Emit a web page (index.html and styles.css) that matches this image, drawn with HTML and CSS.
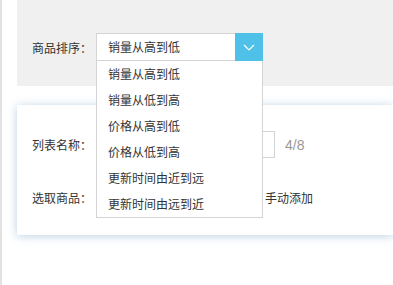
FILE: index.html
```html
<!DOCTYPE html>
<html lang="zh-CN">
<head>
  <meta charset="UTF-8" />
  <meta name="viewport" content="width=device-width, initial-scale=1.0"/>
  <title>列表设置</title>
  <link rel="stylesheet" href="styles.css">
</head>
<body>
  <div class="page">
    <div class="filter">
      <div class="row">
        <span class="label">商品排序：</span>
        <div class="select">
          <div class="select-value">销量从高到低</div>
          <div class="select-btn">
            <svg width="12" height="7" viewBox="0 0 12 7"><path d="M1 1 L6 6 L11 1" fill="none" stroke="#fff" stroke-width="1.2"/></svg>
          </div>
          <ul class="options">
            <li>销量从高到低</li>
            <li>销量从低到高</li>
            <li>价格从高到低</li>
            <li>价格从低到高</li>
            <li>更新时间由近到远</li>
            <li>更新时间由远到近</li>
          </ul>
        </div>
      </div>
    </div>

    <div class="card">
      <div class="row">
        <span class="label">列表名称：</span>
        <input class="text-input" type="text">
        <span class="count">4/8</span>
      </div>
      <div class="row row-pick">
        <span class="label">选取商品：</span>
        <label class="radio radio-auto"><i class="dot"></i></label>
        <label class="radio"><i class="dot"></i>手动添加</label>
      </div>
    </div>
  </div>
</body>
</html>
```

FILE: styles.css
```css
body {
  margin: 0;
  font-family: "Noto Sans CJK SC", "Noto Sans", sans-serif;
  font-size: 12px;
  color: #333;
  background: #fff;
}
.page {
  border-left: 2px solid #e2e2e2;
  min-height: 285px;
  padding-left: 15px;
  overflow: hidden;
}
.filter {
  background: #f0f0f0;
  height: 86px;
  padding: 33px 0 0 15px;
  box-sizing: border-box;
}
.row {
  display: flex;
  align-items: center;
}
.label {
  width: 64px;
  flex-shrink: 0;
}
.select {
  position: relative;
  display: flex;
  width: 167px;
  height: 28px;
  z-index: 2;
}
.select-value {
  flex: 1;
  border: 1px solid #d4d4d4;
  border-right: none;
  background: #fff;
  padding-left: 11px;
  line-height: 26px;
}
.select-btn {
  width: 28px;
  height: 28px;
  background: #4fc1e9;
  display: flex;
  align-items: center;
  justify-content: center;
}
.options {
  position: absolute;
  top: 28px;
  left: 0;
  width: 167px;
  box-sizing: border-box;
  margin: 0;
  padding: 0;
  list-style: none;
  background: #fff;
  border: 1px solid #d4d4d4;
  border-top: none;
}
.options li {
  height: 26px;
  line-height: 26px;
  padding-left: 11px;
}
.card {
  margin-top: 19px;
  height: 130px;
  background: #fff;
  box-shadow: 0 1px 9px rgba(165, 195, 218, 0.75);
  padding: 26px 0 0 15px;
  box-sizing: border-box;
}
.text-input {
  width: 179px;
  height: 27px;
  box-sizing: border-box;
  border: 1px solid #d4d4d4;
  margin: 0;
  padding: 0 10px;
  font: inherit;
  color: #333;
}
.count {
  margin-left: 10px;
  color: #999;
  font-size: 14px;
  font-family: "Liberation Sans", Arial, sans-serif;
}
.row-pick {
  margin-top: 31px;
}
.radio {
  display: flex;
  align-items: center;
}
.radio-auto {
  width: 153px;
}
.dot {
  width: 12px;
  height: 12px;
  border: 1px solid #ccc;
  border-radius: 50%;
  box-sizing: border-box;
  margin-right: 4px;
}
```
